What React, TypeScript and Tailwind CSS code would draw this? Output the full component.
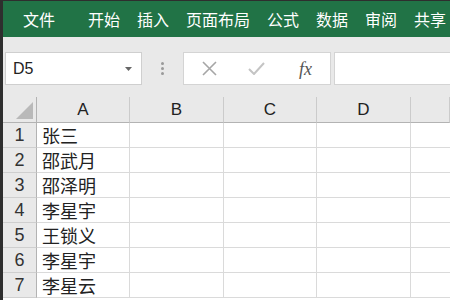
import React from "react";

const cjk = { fontFamily: '"Noto Sans CJK SC", "Noto Sans", sans-serif' };
const latin = { fontFamily: '"Liberation Sans", "Noto Sans CJK SC", sans-serif' };

const names = ["张三", "邵武月", "邵泽明", "李星宇", "王锁义", "李星宇", "李星云"];

export default function App() {
  const menus = ["开始", "插入", "页面布局", "公式", "数据", "审阅", "共享"];
  return (
    <div className="w-[450px] h-[300px] overflow-hidden bg-white border-l-[3px] border-t border-[#2e2e2e] flex flex-col" style={cjk}>
      {/* Menu bar */}
      <div className="h-[36px] shrink-0 bg-[#217346] flex items-center pl-[20px] text-white text-[16px] leading-none whitespace-nowrap">
        <span>文件</span>
        <div className="flex gap-[17px] ml-[33px]">
          {menus.map((m) => (
            <span key={m}>{m}</span>
          ))}
        </div>
      </div>
      {/* Formula bar */}
      <div className="h-[60px] shrink-0 bg-[#e9e9e9] flex items-start pt-[15px] pl-[2px]">
        <div className="w-[137px] h-[33px] bg-white border border-[#cfcfcf] flex items-center pl-[7px] pr-[9px] justify-between">
          <span className="text-[16px] text-[#222]" style={latin}>D5</span>
          <svg width="7" height="4" viewBox="0 0 7 4"><path d="M0 0H7L3.5 4Z" fill="#666" /></svg>
        </div>
        <div className="w-[41px] h-[33px] flex flex-col items-center justify-center gap-[2px]">
          <div className="w-[3px] h-[3px] rounded-full bg-[#9a9a9a]" />
          <div className="w-[3px] h-[3px] rounded-full bg-[#9a9a9a]" />
          <div className="w-[3px] h-[3px] rounded-full bg-[#9a9a9a]" />
        </div>
        <div className="w-[148px] h-[33px] bg-white border border-[#d4d4d4] flex items-center">
          <div className="w-[48px] flex justify-center pl-[2px]">
            <svg width="15" height="15" viewBox="0 0 15 15"><path d="M1 1L14 14M14 1L1 14" stroke="#a6a6a6" strokeWidth="1.6" /></svg>
          </div>
          <div className="w-[49px] flex justify-center">
            <svg width="17" height="13" viewBox="0 0 17 13"><path d="M1 7L6 12L16 1" stroke="#c4c4c4" strokeWidth="2" fill="none" /></svg>
          </div>
          <div className="w-[49px] flex justify-center text-[18px] italic text-[#555] leading-none" style={{ fontFamily: '"Liberation Serif", serif' }}>
            fx
          </div>
        </div>
        <div className="flex-1 ml-[3px] h-[33px] bg-white border border-[#d4d4d4] border-r-0" />
      </div>
      {/* Sheet grid */}
      <div className="grid grid-cols-[34px_93px_94px_93px_94px_1fr] text-[#222]">
        <div className="h-[26px] bg-[#e9e9e9] border-r border-b border-[#b3b3b3] flex items-end justify-end pr-[3px] pb-[3px]">
          <svg width="17" height="17" viewBox="0 0 17 17"><path d="M17 0V17H0Z" fill="#b9b9b9" /></svg>
        </div>
        {["A", "B", "C", "D", ""].map((c, i) => (
          <div
            key={i}
            className="h-[26px] bg-[#e9e9e9] border-r border-b border-r-[#cbcbcb] border-b-[#b3b3b3] flex items-center justify-center text-[17px]"
            style={latin}
          >
            {c}
          </div>
        ))}
        {names.map((n, r) => (
          <React.Fragment key={r}>
            <div
              className="h-[25px] bg-[#e9e9e9] border-r border-b border-r-[#b3b3b3] border-b-[#cfcfcf] flex items-center justify-center text-[18px] text-[#333]"
              style={latin}
            >
              {r + 1}
            </div>
            <div className="h-[25px] border-r border-b border-[#dadada] flex items-center pl-[5px] text-[18px] leading-none whitespace-nowrap">
              {n}
            </div>
            <div className="h-[25px] border-r border-b border-[#dadada]" />
            <div className="h-[25px] border-r border-b border-[#dadada]" />
            <div className="h-[25px] border-r border-b border-[#dadada]" />
            <div className="h-[25px] border-b border-[#dadada]" />
          </React.Fragment>
        ))}
      </div>
    </div>
  );
}
